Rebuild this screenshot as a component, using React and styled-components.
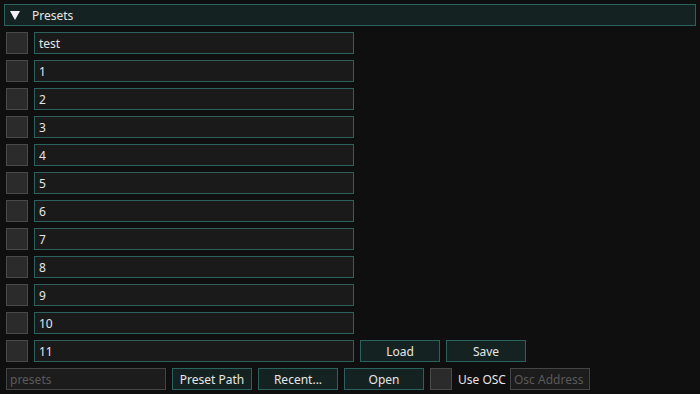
import styled, { createGlobalStyle } from "styled-components";

const GlobalStyle = createGlobalStyle`
  html, body {
    margin: 0;
    padding: 0;
    background: #0f0f0f;
  }
  body {
    font-family: "Noto Sans", "Open Sans", sans-serif;
    font-size: 12px;
    color: #e6e6e6;
  }
`;

const Page = styled.div`
  width: 700px;
  height: 394px;
  box-sizing: border-box;
  padding: 4px 4px 0 4px;
  display: flex;
  flex-direction: column;
  overflow: hidden;
`;

const Header = styled.div`
  height: 22px;
  width: 692px;
  box-sizing: border-box;
  background: #142321;
  border: 1px solid #2b625e;
  display: flex;
  align-items: center;
  gap: 12px;
  padding-left: 5px;
`;

const Arrow = styled.span`
  width: 0;
  height: 0;
  margin-top: 1px;
  border-left: 5px solid transparent;
  border-right: 5px solid transparent;
  border-top: 9px solid #f2f2f2;
`;

const HeaderText = styled.span`
  color: #e6e6e6;
`;

const List = styled.div`
  display: flex;
  flex-direction: column;
  gap: 6px;
  padding: 6px 0 0 2px;
`;

const Row = styled.div`
  display: flex;
  gap: 6px;
  height: 22px;
  align-items: stretch;
`;

const Check = styled.div`
  width: 22px;
  height: 22px;
  box-sizing: border-box;
  background: #2b2b2b;
  border: 1px solid #4a4a4a;
`;

const Field = styled.div`
  width: ${(p) => p.$w}px;
  height: 22px;
  box-sizing: border-box;
  background: ${(p) => (p.$muted ? "#1c1c1c" : "#1a1a1a")};
  border: 1px solid ${(p) => (p.$muted ? "#444444" : "#2b625e")};
  color: ${(p) => (p.$muted ? "#5a5a5a" : "#e6e6e6")};
  display: flex;
  align-items: center;
  padding-left: ${(p) => (p.$muted ? 3 : 4)}px;
  white-space: nowrap;
  overflow: hidden;
`;

const Button = styled.div`
  width: 80px;
  height: 22px;
  box-sizing: border-box;
  background: #142321;
  border: 1px solid #2b625e;
  display: flex;
  align-items: center;
  justify-content: center;
  color: #e6e6e6;
`;

const Label = styled.span`
  width: 46px;
  display: flex;
  align-items: center;
  white-space: nowrap;
  color: #e6e6e6;
`;

const names = ["test", "1", "2", "3", "4", "5", "6", "7", "8", "9", "10", "11"];

export default function App() {
  return (
    <>
      <GlobalStyle />
      <Page>
        <Header>
          <Arrow />
          <HeaderText>Presets</HeaderText>
        </Header>
        <List>
          {names.map((n, i) => (
            <Row key={n}>
              <Check />
              <Field $w={320}>{n}</Field>
              {i === names.length - 1 && (
                <>
                  <Button>Load</Button>
                  <Button>Save</Button>
                </>
              )}
            </Row>
          ))}
          <Row>
            <Field $w={160} $muted>presets</Field>
            <Button>Preset Path</Button>
            <Button>Recent...</Button>
            <Button>Open</Button>
            <Check />
            <Label>Use OSC</Label>
            <Field $w={80} $muted>Osc Address</Field>
          </Row>
        </List>
      </Page>
    </>
  );
}
